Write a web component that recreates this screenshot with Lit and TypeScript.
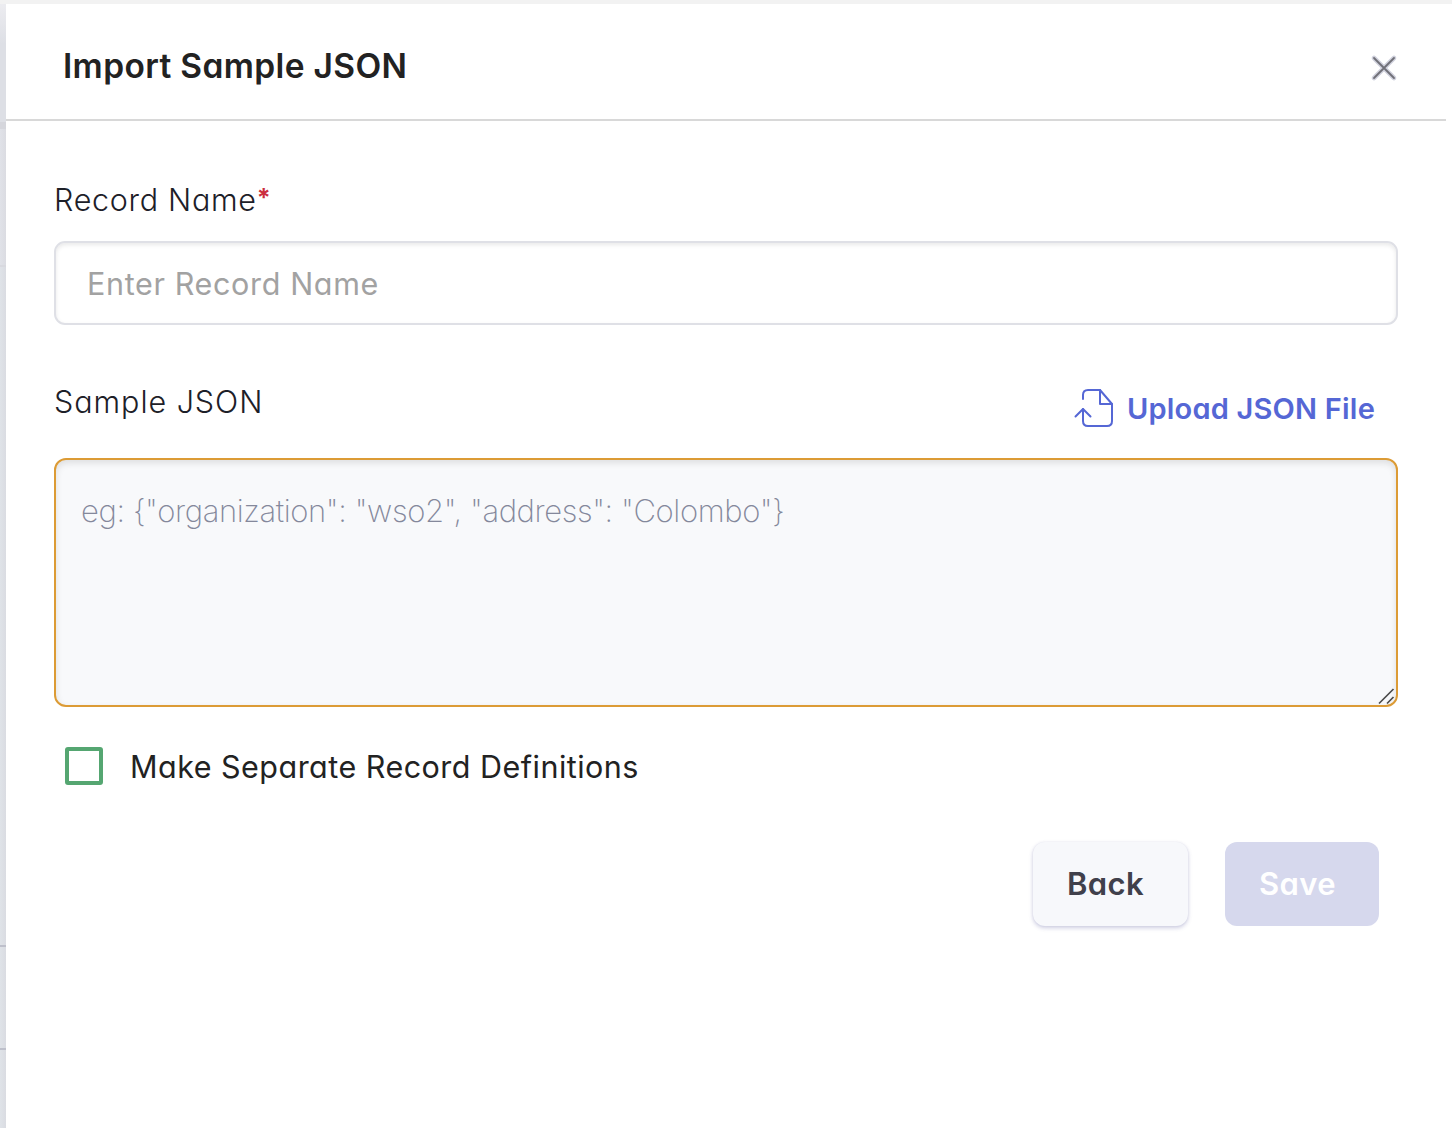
import { LitElement, html, css } from "lit";
import { customElement } from "lit/decorators.js";

@customElement("app-root")
export class AppRoot extends LitElement {
  static styles = css`
    :host { display: block; }
    * { box-sizing: border-box; }
    .page {
      display: grid;
      grid-template: 4px 1124px / 6px 1446px 2px;
      width: 1454px;
      height: 1128px;
      overflow: hidden;
      background: #fff;
      color: #222228;
      font-family: Inter, "Liberation Sans", sans-serif;
      font-feature-settings: "cv11";
    }
    .topbar { grid-column: 1 / 3; background: #f2f2f2; }
    .edge {
      grid-row: 2;
      grid-column: 1;
      display: flex;
      flex-direction: column;
      background: linear-gradient(90deg, #dfe3e8, #dadce2);
    }
    .seg-top { height: 118px; background: linear-gradient(#ececf0, #dddfe5 40px); }
    .seg-bar { height: 7px; background: #d5d6dc; }
    .seg-mid { height: 138px; background: linear-gradient(90deg, #e0e2e8, #dbdce2); border-bottom: 2px solid #d8d9df; }
    .seg-a { height: 680px; border-bottom: 2px solid #bec0cb; }
    .seg-b { height: 103px; border-bottom: 2px solid #bec0cb; }
    .drawer { grid-row: 2; grid-column: 2; background: #fff; }
    .header {
      display: flex;
      justify-content: space-between;
      align-items: center;
      width: 1440px;
      height: 117px;
      padding: 12px 47px 0 57px;
      border-bottom: 2px solid #d8d8d8;
    }
    .title { margin: 0; font-size: 33.5px; line-height: 40px; font-weight: 600; color: #222; letter-spacing: 0.35px; white-space: nowrap; padding-bottom: 3px; }
    .close { width: 30px; height: 30px; padding: 0; border: 0; background: none; display: block; }
    svg { display: block; }
    .form { padding: 59px 54px 0 48px; display: flex; flex-direction: column; }
    .label { display: flex; font-size: 30.5px; line-height: 40px; height: 40px; font-weight: 300; color: #1d2028; white-space: nowrap; letter-spacing: 0.7px; }
    .sample { letter-spacing: 0.95px; }
    .star { color: #cb2e3e; font-weight: 700; font-size: 25px; line-height: 37px; letter-spacing: 0; }
    .input {
      width: 1344px;
      height: 84px;
      margin-top: 21px;
      padding: 0 31px;
      border: 2px solid #dfe0e6;
      border-radius: 11px;
      background: #fff;
      box-shadow: inset 0 2px 4px rgba(0, 0, 0, 0.09);
      outline: none;
      font: 400 30.5px Inter, sans-serif;
      font-feature-settings: "cv11";
      letter-spacing: 0.65px;
    }
    .input::placeholder { color: #a2a2a2; opacity: 1; }
    .row { display: flex; justify-content: space-between; height: 76px; margin-top: 57px; }
    .upload { display: flex; align-items: center; height: 52px; padding-right: 23px; gap: 13px; color: #5567d5; font-weight: 600; font-size: 29px; letter-spacing: 0.2px; white-space: nowrap; }
    .area {
      width: 1344px;
      height: 249px;
      padding: 31px 25px;
      border: 2px solid #dc9b35;
      border-radius: 12px;
      background: #f8f9fb;
      box-shadow: inset 0 3px 7px rgba(0, 0, 0, 0.11);
      display: flex;
      justify-content: space-between;
    }
    .text {
      flex: 1;
      padding: 0;
      border: 0;
      outline: none;
      resize: none;
      background: none;
      font: 200 31px/40px Inter, sans-serif;
      letter-spacing: -0.4px;
      color: #84889b;
    }
    .text::placeholder { color: #84889b; opacity: 1; }
    .grip { align-self: flex-end; margin: 0 -25px -31px 0; }
    .check { display: flex; align-items: center; gap: 27px; height: 40px; margin: 39px 0 0 11px; font-size: 30.5px; color: #222; white-space: nowrap; letter-spacing: 0.48px; }
    .box { width: 38px; height: 38px; border: 4px solid #55a671; border-radius: 3px; }
    .actions { display: flex; justify-content: flex-end; gap: 37px; margin-top: 56px; padding-right: 19px; }
    .btn { height: 84px; padding: 0 0 1px; border: 0; border-radius: 12px; font: 600 31px Inter, sans-serif; font-feature-settings: "cv11"; letter-spacing: 0.4px; }
    .back { width: 155px; padding-right: 10px; color: #40404b; background: #f7f8fb; box-shadow: 0 2px 4px rgba(80, 80, 150, 0.28), 0 0 2px rgba(80, 80, 150, 0.1); }
    .save { width: 154px; padding-right: 9px; color: #fff; background: #d6d8ed; }
  `;

  render() {
    return html`
      <div class="page">
        <div class="topbar"></div>
        <div class="edge">
          <div class="seg-top"></div>
          <div class="seg-bar"></div>
          <div class="seg-mid"></div>
          <div class="seg-a"></div>
          <div class="seg-b"></div>
        </div>
        <div class="drawer">
          <div class="header">
            <h1 class="title">Import Sample JSON</h1>
            <button class="close">
              <svg width="30" height="30" viewBox="0 0 30 30" fill="none" stroke-linecap="round">
                <path d="M5 5 25 25M25 5 5 25" stroke="#cfd0dc" stroke-width="4.6" />
                <path d="M5 5 25 25M25 5 5 25" stroke="#707078" stroke-width="1.8" />
              </svg>
            </button>
          </div>
          <div class="form">
            <div class="label"><span>Record Name</span><span class="star">*</span></div>
            <input class="input" placeholder="Enter Record Name" />
            <div class="row">
              <div class="label sample">Sample JSON</div>
              <div class="upload">
                <svg width="40" height="40" viewBox="0 0 40 40" fill="none" stroke="#5567d5" stroke-width="2" stroke-linecap="round" stroke-linejoin="round">
                  <path d="M9 11V7Q9 2 14 2H26L38 16V33Q38 38 33 38H14Q9 38 9 33V21" />
                  <path d="M26 2V16H38" />
                  <path d="M1.5 28.5 9 21 16.5 28.5" />
                </svg>
                <span>Upload JSON File</span>
              </div>
            </div>
            <div class="area">
              <textarea class="text" placeholder='eg: {"organization": "wso2", "address": "Colombo"}'></textarea>
              <svg class="grip" width="18" height="18" viewBox="0 0 18 18" stroke="#4c4c4c" stroke-width="1.7">
                <path d="M1 16.5 15.5 2M9 16.5 15.5 10" />
              </svg>
            </div>
            <div class="check"><span class="box"></span><span>Make Separate Record Definitions</span></div>
            <div class="actions">
              <button class="btn back">Back</button>
              <button class="btn save">Save</button>
            </div>
          </div>
        </div>
      </div>
    `;
  }
}
